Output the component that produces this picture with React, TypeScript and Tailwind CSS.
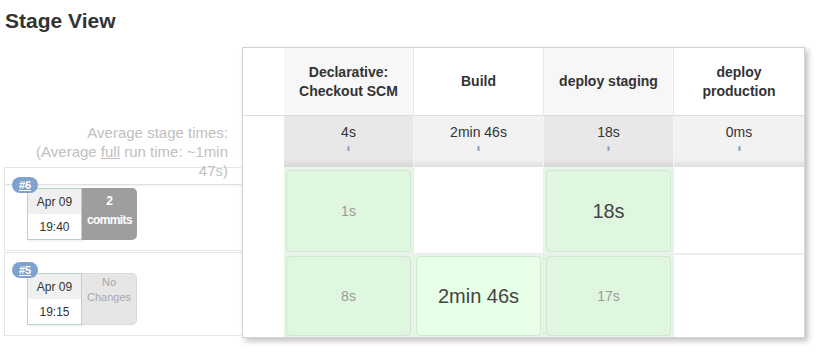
import React from 'react';

type Stage = { name: string[]; avg: string; dark: boolean };

const stages: Stage[] = [
  { name: ['Declarative:', 'Checkout SCM'], avg: '4s', dark: true },
  { name: ['Build'], avg: '2min 46s', dark: false },
  { name: ['deploy staging'], avg: '18s', dark: true },
  { name: ['deploy production'], avg: '0ms', dark: false },
];

type Cell = { text: string; big: boolean; fresh?: boolean } | null;

const runs: { id: string; date: string; time: string; commits: number; cells: Cell[] }[] = [
  {
    id: '#6',
    date: 'Apr 09',
    time: '19:40',
    commits: 2,
    cells: [{ text: '1s', big: false }, null, { text: '18s', big: true }, null],
  },
  {
    id: '#5',
    date: 'Apr 09',
    time: '19:15',
    commits: 0,
    cells: [
      { text: '8s', big: false },
      { text: '2min 46s', big: true, fresh: true },
      { text: '17s', big: false },
      null,
    ],
  },
];

function RunBox({ run, first }: { run: (typeof runs)[number]; first: boolean }) {
  return (
    <div className={`relative h-[84px] border border-r-0 border-[#e5e5e5] ${first ? '' : 'mt-[1px]'}`}>
      {first ? (
        <div className="h-[17px] border-b border-[#e0e0e0] shadow-[0_1px_2px_rgba(0,0,0,0.06)]" />
      ) : (
        <div className="h-[17px]" />
      )}
      <a className="absolute left-[7px] top-[9px] flex h-[16px] w-[26px] items-center justify-center rounded-full bg-[#7fa2cc] text-[11px] font-bold leading-none text-white underline">
        {run.id}
      </a>
      <div className="ml-[22px] mt-[3px] flex">
        <div className="h-[52px] w-[55px] border border-[#b6d3c3] shadow-[1px_1px_2px_rgba(0,0,0,0.08)]">
          <div className="flex h-[25px] items-center justify-center bg-[#f0f0f0] text-[12px] text-[#333]">{run.date}</div>
          <div className="flex h-[25px] items-center justify-center bg-white text-[12px] text-[#333]">{run.time}</div>
        </div>
        {run.commits > 0 ? (
          <div className="h-[52px] w-[55px] rounded-r-[5px] bg-[#9e9e9e] pt-[4px] text-center text-[12px] font-bold leading-[19px] text-white">
            <div>{run.commits}</div>
            <div className="tracking-[-0.6px]">commits</div>
          </div>
        ) : (
          <div className="h-[52px] w-[55px] rounded-r-[5px] border border-l-0 border-[#dadada] bg-[#e6e6e6] pt-[1px] text-center text-[11px] leading-[15px] text-[#a8a8a8]">
            No
            <br />
            Changes
          </div>
        )}
      </div>
    </div>
  );
}

export default function App() {
  return (
    <div className="min-h-screen bg-white" style={{ fontFamily: '"Liberation Sans", Arial, sans-serif' }}>
      <div className="pl-[4px] pt-[9px]">
        <h2 className="pl-px text-[21px] font-bold leading-[24px] text-[#333]">Stage View</h2>
        <div className="mt-[14px] flex items-start">
          {/* left column: averages + build list */}
          <div className="w-[238px]">
            <div className="flex h-[120px] justify-end pr-[14px] pt-[76px]">
              <p className="relative z-10 w-[205px] text-right text-[15px] leading-[19px] text-[#c0c0c0]">
                Average stage times:
                <br />
                (Average <u>full</u> run time: ~1min 47s)
              </p>
            </div>
            {runs.map((r, i) => (
              <RunBox key={r.id} run={r} first={i === 0} />
            ))}
          </div>

          {/* stage table */}
          <div className="w-[563px] border border-[#d3d3d3] bg-white shadow-[3px_3px_6px_rgba(0,0,0,0.25)]">
            <div className="grid grid-cols-[41px_130px_130px_130px_130px]">
              {/* header */}
              <div className="h-[67px] bg-white" />
              {stages.map((s, i) => (
                <div
                  key={s.avg}
                  className={`flex h-[67px] flex-col items-center justify-center px-[10px] text-center text-[14px] font-bold leading-[19px] text-[#333] ${
                    s.dark ? 'bg-[#f7f7f7]' : 'bg-white'
                  } ${i < 3 ? 'border-r border-[#e8e8e8]' : ''}`}
                >
                  {s.name.map((n) => (
                    <span key={n}>{n}</span>
                  ))}
                </div>
              ))}

              {/* averages */}
              <div className="h-[52px] border-t border-[#dcdcdc] bg-white" />
              {stages.map((s, i) => (
                <div
                  key={s.avg + 'a'}
                  className={`h-[52px] border-t border-[#dcdcdc] pt-[7px] text-center text-[14px] leading-[19px] text-[#333] ${
                    s.dark
                      ? 'bg-[linear-gradient(to_bottom,#e8e8e8_84%,#d5d5d5)]'
                      : 'bg-[linear-gradient(to_bottom,#f2f2f2_84%,#dfdfdf)]'
                  } ${i < 3 ? 'border-r border-r-[#f4f4f4]' : ''}`}
                >
                  {s.avg}
                  <div className="mx-auto mt-[4px] h-[5px] w-[3px] border border-[#b5c2da] bg-[#8799bd]" />
                </div>
              ))}

              {/* runs */}
              {runs.map((r, ri) => (
                <React.Fragment key={r.id + 'row'}>
                  <div className={`${ri === 0 ? 'h-[86px]' : 'h-[84px]'} bg-white`} />
                  {r.cells.map((c, ci) => (
                    <div
                      key={ci}
                      className={`${ri === 0 ? 'h-[86px] pt-[3px]' : 'h-[84px] border-t-2 border-t-[#eeeeee]'} px-[2px] pb-[1px] ${
                        c ? 'bg-[#e6f6e6]' : 'bg-white'
                      } ${ci < 3 ? 'border-r border-r-[#ececec]' : ''} ${ri === 1 ? 'pt-[1px]' : ''}`}
                    >
                      {c && (
                        <div
                          className={`flex h-full items-center justify-center rounded-[4px] border ${
                            c.fresh ? 'border-[#d3e8d3] bg-[#e6ffe6]' : 'border-[#d2e5d2] bg-[#dff7df]'
                          } ${c.big ? 'text-[20px] text-[#444]' : 'text-[14px] text-[#9a9a9a]'}`}
                        >
                          {c.text}
                        </div>
                      )}
                    </div>
                  ))}
                </React.Fragment>
              ))}
            </div>
          </div>
        </div>
      </div>
    </div>
  );
}
